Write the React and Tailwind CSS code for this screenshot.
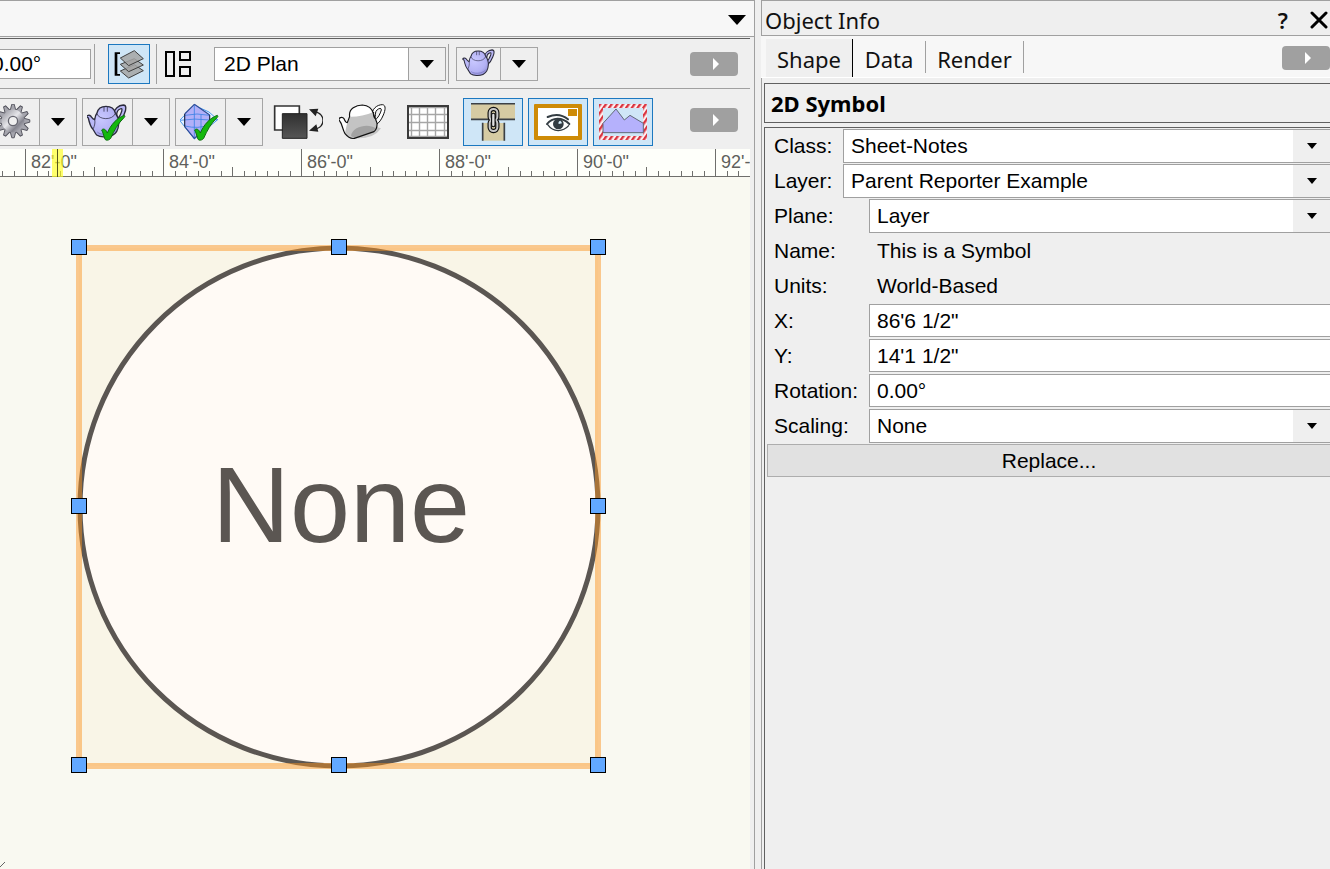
import React from 'react';

function Caret({ className = 'h-2 w-3.5' }) {
  return (
    <svg viewBox="0 0 14 8" preserveAspectRatio="none" className={className} aria-hidden="true">
      <path d="M0 0H14L7 8Z" fill="#000" />
    </svg>
  );
}

function Teapot({ checked, className }) {
  return (
    <svg viewBox={checked ? '5 -2 126 120' : '2 0 126 120'} className={className} aria-hidden="true">
      <defs>
        <radialGradient id="pot" cx="0.45" cy="0.4" r="0.65">
          <stop offset="0" stopColor="#c9c8ff" />
          <stop offset="0.7" stopColor="#b3b1f4" />
          <stop offset="1" stopColor="#9290d8" />
        </radialGradient>
      </defs>
      <path
        d="M84 36C86 18 100 8 114 7C124 7 123 20 117 33C112 46 106 56 97 63L91 53C100 47 106 36 109 26C111 18 110 16 104 19C97 22 94 28 94 37Z"
        fill="#b9b7f5"
        stroke="#2b2b3c"
        strokeWidth="4"
      />
      <path
        d="M4 42C4 38 12 36 16 40C20 45 22 50 28 51C29 42 31 36 35 31C38 17 50 11 62 11C76 11 87 18 90 31C97 40 101 52 100 64C99 82 91 94 80 99C66 105 44 104 34 97C29 92 28 87 23 80C15 72 11 56 9 46Z"
        fill="url(#pot)"
        stroke="#2b2b3c"
        strokeWidth="4"
        strokeLinejoin="round"
      />
      <path d="M35 33C40 52 82 54 90 32M56 11V27M66 11V27M28 51C30 60 28 68 24 78" fill="none" stroke="#3c3b58" strokeWidth="2.5" />
      <path d="M36 88C45 98 76 98 90 82" fill="none" stroke="#7d7bc4" strokeWidth="3" />
      {checked && <Check />}
    </svg>
  );
}

function Check() {
  return (
    <path
      d="M49 82C54 76 62 80 66 91C76 67 94 46 117 38C119 40 119 42 117 44C98 62 86 84 76 107C72 113 61 115 58 108C55 97 53 90 49 82Z"
      fill="#14b80c"
      stroke="#116b12"
      strokeWidth="3"
      strokeLinejoin="round"
    />
  );
}

function DiamondGrid() {
  return (
    <svg viewBox="5 -2 126 120" className="h-10 w-[42px]" aria-hidden="true">
      <path d="M4 53L48 8L92 28L118 51L48 109Z" fill="#e6f1ff" stroke="#4b9bf0" strokeWidth="3" />
      <path d="M48 5L94 37V65L48 107L19 72V34Z" fill="#b2b0f8" />
      <path d="M20 38Q55 30 94 38M4 53Q50 46 94 52L118 51M20 70Q60 80 94 66M48 6V105M68 36V88" fill="none" stroke="#3c82e6" strokeWidth="2.5" />
      <path d="M19 34V72M94 37V65" fill="none" stroke="#1d2846" strokeWidth="3.5" />
      <path d="M48 5L94 37M94 65L48 107L19 72M19 34L48 5" fill="none" stroke="#2c4c96" strokeWidth="3.5" />
      <Check />
    </svg>
  );
}

function Gear() {
  const teeth = Array.from({ length: 12 }, (_, i) => i * 30);
  return (
    <svg viewBox="2 1 36 36" className="h-9 w-9" aria-hidden="true">
      <defs>
        <linearGradient id="steel" x1="0" y1="0" x2="1" y2="1">
          <stop offset="0" stopColor="#8b8b94" />
          <stop offset="0.45" stopColor="#e6e6ea" />
          <stop offset="0.7" stopColor="#85858f" />
          <stop offset="1" stopColor="#d0d0d6" />
        </linearGradient>
      </defs>
      {teeth.map((a) => (
        <path key={a} d="M15 8L16.8 1.2H19.2L21 8Z" fill="#a5a5ad" stroke="#4e4e58" strokeWidth="0.9" transform={`rotate(${a} 18 18)`} />
      ))}
      <circle cx="18" cy="18" r="11.4" fill="url(#steel)" />
      <circle cx="18" cy="18" r="4.6" fill="#f0f0f0" stroke="#666670" strokeWidth="1.3" />
    </svg>
  );
}

function LayerStack() {
  return (
    <svg viewBox="0 0 90 90" className="h-[30px] w-[30px]" aria-hidden="true">
      <path d="M2 10H18V15H10V75H18V80H2Z" fill="#000" />
      <g fill="#a5a5a5" fillOpacity="0.85" stroke="#3f3f3f" strokeWidth="3" strokeLinejoin="round">
        <path d="M19 66L61 47L88 65L44 87Z" />
        <path d="M19 46L61 29L88 48L44 68Z" />
        <path d="M19 27L61 5L88 29L44 50Z" />
      </g>
    </svg>
  );
}

function Panes() {
  return (
    <svg viewBox="0 0 26 26" className="h-[26px] w-[26px]" aria-hidden="true">
      <g fill="none" stroke="#000" strokeWidth="2">
        <path d="M1 1H9V25H1ZM15 1H25V9H15ZM15 16H25V25H15Z" />
      </g>
    </svg>
  );
}

function Swap() {
  return (
    <svg viewBox="-2 0 150 105" className="h-[35px] w-[50px]" aria-hidden="true">
      <defs>
        <linearGradient id="dark" x1="0" y1="0" x2="0" y2="1">
          <stop offset="0" stopColor="#303030" />
          <stop offset="1" stopColor="#555" />
        </linearGradient>
      </defs>
      <path d="M3 3H77V75H3Z" fill="#fff" stroke="#333" strokeWidth="5" />
      <path d="M26 26H100V100H26Z" fill="url(#dark)" stroke="#222" strokeWidth="3" />
      <path d="M124 20C156 29 156 64 124 73" fill="none" stroke="#222" strokeWidth="4" />
      <path d="M106 13L134 11L126 34ZM106 77L128 58L134 80Z" fill="#222" />
    </svg>
  );
}

function ShadedPot() {
  return (
    <svg viewBox="2 2 144 114" className="h-[38px] w-12" aria-hidden="true">
      <path d="M45 108Q106 112 128 78L100 70Z" fill="#c6c6c6" />
      <path d="M101 42C99 20 116 7 132 7C144 8 141 24 135 38C129 52 123 61 114 66L108 55C119 48 126 34 129 23C130 15 118 18 113 27C110 34 112 40 110 48Z" fill="#fff" stroke="#111" strokeWidth="3" />
      <path d="M2 53C0 46 12 42 17 49C20 56 23 61 27 61L34 42C30 19 54 8 72 8C88 9 100 15 105 33L116 62C117 76 113 83 107 88L48 108C38 110 28 104 20 94C12 80 12 64 2 53Z" fill="#fff" />
      <path d="M27 61L33 43C54 44 83 39 106 29L116 62C117 76 113 83 107 88L48 108C38 110 27 103 20 94C21 84 24 72 27 61Z" fill="#c4c4c4" />
      <path d="M38 100C42 72 91 62 112 78L107 88L48 108Z" fill="#a2a2a2" />
      <path d="M2 53C0 46 12 42 17 49C20 56 23 61 27 61L34 42C30 19 54 8 72 8C88 9 100 15 105 33L116 62C117 76 113 83 107 88L48 108C38 110 28 104 20 94C12 80 12 64 2 53ZM106 29C104 38 106 43 109 48" fill="none" stroke="#111" strokeWidth="3.5" strokeLinejoin="round" />
    </svg>
  );
}

function GridIcon() {
  return (
    <svg viewBox="0 0 42 34" className="mr-px h-[34px] w-[42px]" aria-hidden="true">
      <path d="M1 1H41V33H1Z" fill="#fff" />
      <path d="M4.5 1V33M12.5 1V33M20.5 1V33M28.5 1V33M37.5 1V33M1 2.5H41M1 9.5H41M1 17.5H41M1 25.5H41M1 31.5H41" stroke="#a6a6a6" strokeWidth="1.4" fill="none" />
      <path d="M1 1H41V33H1Z" fill="none" stroke="#3a3a3a" strokeWidth="2" />
    </svg>
  );
}

function WallLink() {
  return (
    <svg viewBox="0 0 132 114" className="h-[38px] w-11" aria-hidden="true">
      <path d="M0 3H132V49H0Z" fill="#d6cba3" />
      <path d="M35 60H100V113H35Z" fill="#d6cba3" />
      <path d="M0 2H132M0 49H132M35 59V113M100 59V113" stroke="#3b4046" strokeWidth="5" fill="none" />
      <g fill="none">
        <rect x="56" y="18" width="23" height="34" rx="11" stroke="#111" strokeWidth="13" />
        <rect x="56" y="50" width="23" height="34" rx="11" stroke="#111" strokeWidth="13" />
        <rect x="56" y="18" width="23" height="34" rx="11" stroke="#c8c8c8" strokeWidth="6" />
        <rect x="56" y="50" width="23" height="34" rx="11" stroke="#c8c8c8" strokeWidth="6" />
        <path d="M67 36V66" stroke="#111" strokeWidth="14" strokeLinecap="round" />
        <path d="M67 36V66" stroke="#e0e0e0" strokeWidth="7" strokeLinecap="round" />
      </g>
    </svg>
  );
}

function EyeFrame() {
  return (
    <svg viewBox="0 0 144 108" className="h-9 w-12" aria-hidden="true">
      <rect width="144" height="108" rx="3" fill="#ce8b07" />
      <path d="M12 12H132V96H12Z" fill="#fff" />
      <path d="M102 15H129V36H102Z" fill="#ce8b07" />
      <g fill="none" stroke="#333c42" strokeLinecap="round">
        <path d="M41 39C62 30 85 32 102 46" strokeWidth="6" />
        <path d="M39 60C55 40 84 38 106 60" strokeWidth="6" />
        <path d="M41 62C58 86 87 84 104 65" strokeWidth="4" />
      </g>
      <circle cx="73" cy="60" r="16" fill="#333c42" />
      <path d="M74 60A8 8 0 0 1 79 50A12 12 0 0 1 84 58Z" fill="#d8eefb" />
    </svg>
  );
}

function CropView() {
  return (
    <svg viewBox="0 0 144 108" className="h-9 w-12" aria-hidden="true">
      <defs>
        <pattern id="hatch" width="14" height="14" patternUnits="userSpaceOnUse" patternTransform="rotate(35)">
          <rect width="14" height="14" fill="#fdeff0" />
          <rect width="7" height="14" fill="#d93440" />
        </pattern>
      </defs>
      <path d="M0 0H144V108H0ZM12 12V96H132V12Z" fill="url(#hatch)" fillRule="evenodd" />
      <path d="M12 58L51 15L76 48L93 34L133 58V86H12Z" fill="#b5b1fc" stroke="#626a78" strokeWidth="3" />
    </svg>
  );
}

function MoreButton({ label }) {
  return (
    <button aria-label={label} className="flex h-6 w-12 shrink-0 items-center justify-center rounded bg-[#a0a0a0] pl-1">
      <svg viewBox="0 0 6 12" className="h-3 w-1.5" aria-hidden="true">
        <path d="M0 0L6 6L0 12Z" fill="#fff" />
      </svg>
    </button>
  );
}

function SplitButton({ label, small, className = '', children }) {
  return (
    <div className={`flex shrink-0 border border-[#a5a5a5] ${small ? 'h-[34px]' : 'h-12'} ${className}`}>
      <button aria-label={label} className={`flex items-center justify-center ${small ? 'w-[43px]' : 'w-[49px]'}`}>
        {children}
      </button>
      <button aria-label={`${label} options`} className="flex w-[37px] items-center justify-center border-l border-[#a5a5a5]">
        <Caret />
      </button>
    </div>
  );
}

function ToolButton({ label, active, children }) {
  return (
    <button
      aria-label={label}
      className={`flex h-12 w-[60px] shrink-0 items-center justify-center border ${active ? 'border-[#1c78c0] bg-[#cfe6f7]' : 'border-transparent'}`}
    >
      {children}
    </button>
  );
}

function Separator() {
  return <div className="h-10 w-px shrink-0 bg-[#a0a0a0]" />;
}

const ticks = Array.from({ length: 140 }, (_, i) => i - 2);

function Ruler() {
  return (
    <svg className="block h-7 w-full bg-[#fefffa]" role="img" aria-label="Ruler">
      {ticks.map((i) => {
        const x = 25.5 + Math.round(i * 11.5);
        const top = i % 12 === 0 ? 0 : i % 6 === 0 ? 18 : 22;
        return <path key={i} d={`M${x} ${top}V27`} stroke="#6f6f6c" />;
      })}
      <path d="M0 27.5H2000" stroke="#6f6f6c" />
      {[82, 84, 86, 88, 90, 92].map((n, i) => (
        <text key={n} x={31 + i * 138} y="19" className="fill-[#5f5f5c] font-['Liberation_Sans',sans-serif] text-[18px]">
          {`${n}'-0"`}
        </text>
      ))}
      <rect x="52" width="11" height="28" fill="#ffff20" fillOpacity="0.65" />
      <path d="M57.5 0V28" stroke="#55551c" />
    </svg>
  );
}

const handles = [
  [79, 70], [339, 70], [598, 70],
  [79, 329], [598, 329],
  [79, 588], [339, 588], [598, 588],
];

function Drawing() {
  return (
    <svg className="block min-h-[692px] w-full flex-1 bg-[#f9f9f1]" role="img" aria-label="Drawing area">
      <rect x="79" y="71" width="519" height="518" fill="#f9f5e7" />
      <circle cx="339" cy="330" r="259" fill="#fffaf5" stroke="#5b5652" strokeWidth="5" />
      <text x="341" y="365" textAnchor="middle" className="fill-[#5b5652] font-['Liberation_Sans',sans-serif] text-[108px]">
        None
      </text>
      <rect x="79" y="71" width="519" height="518" fill="none" stroke="#fb931f" strokeOpacity="0.48" strokeWidth="6" />
      {handles.map(([x, y]) => (
        <rect key={`${x}-${y}`} x={x - 7.5} y={y - 7.5} width="15" height="15" fill="#62a8ff" stroke="#000" />
      ))}
      <path d="M0 690L5 685" stroke="#666" />
    </svg>
  );
}

function Row({ id, label, wide, children }) {
  return (
    <div className="flex h-[35px] items-start">
      <label htmlFor={id} className={`shrink-0 pl-[7px] leading-[34px] ${wide ? 'w-[76px]' : 'w-[102px]'}`}>
        {label}
      </label>
      {children}
    </div>
  );
}

function PanelSelect({ id, value }) {
  return (
    <div className="relative h-[34px] flex-1 border-y border-l border-[#a0a0a0] bg-white">
      <select id={id} className="h-full w-full appearance-none bg-transparent pr-10 pl-[7px] outline-none">
        <option>{value}</option>
      </select>
      <span className="pointer-events-none absolute inset-y-0 right-0 flex w-[37px] items-center justify-center bg-[#efefef]">
        <Caret className="h-1.5 w-2.5" />
      </span>
    </div>
  );
}

function PanelInput({ id, value }) {
  return (
    <input
      id={id}
      defaultValue={value}
      className="h-[33px] min-w-0 flex-1 border-y border-l border-[#a0a0a0] bg-white pl-[7px] outline-none"
    />
  );
}

function ObjectInfo() {
  return (
    <aside className="flex w-[569px] shrink-0 flex-col">
      <header className="flex h-9 items-center border-y border-l border-[#a0a0a0] pt-1 pr-0.5 pl-[3px] font-['Noto_Sans',sans-serif] text-[22px] leading-8 text-[#111]">
        <h1 className="flex-1">Object Info</h1>
        <button aria-label="Help" className="mr-[22px] font-semibold">?</button>
        <button aria-label="Close">
          <svg viewBox="0 0 18 18" className="h-[18px] w-[18px]" aria-hidden="true">
            <path d="M2 2L16 16M16 2L2 16" stroke="#000" strokeWidth="3" strokeLinecap="round" />
          </svg>
        </button>
      </header>
      <nav role="tablist" className="flex h-[42px] items-end border-b border-white bg-[#f7f7f7] pl-[5px] font-['Noto_Sans',sans-serif] text-[22px] text-[#111]">
        <button role="tab" aria-selected="true" className="h-[38px] w-[87px] border-r border-black bg-[#efefef] pt-0.5">Shape</button>
        <button role="tab" aria-selected="false" className="h-[38px] w-[72px] pt-0.5">Data</button>
        <div className="mb-1 h-8 w-px bg-[#a0a0a0]" />
        <button role="tab" aria-selected="false" className="h-[38px] w-[97px] pt-0.5">Render</button>
        <div className="mb-1 h-8 w-px bg-[#a0a0a0]" />
        <div className="mb-[7px] ml-auto">
          <MoreButton label="More tabs" />
        </div>
      </nav>
      <div className="flex flex-1 flex-col gap-1 border-l border-[#a0a0a0] pt-[5px] pl-0.5">
        <h2 className="h-10 border-y border-l border-[#606060] pl-1.5 font-['Noto_Sans',sans-serif] text-[22px] leading-[38px] font-bold">
          2D Symbol
        </h2>
        <form className="flex-1 border-t border-l border-[#606060] pt-px pl-0.5 text-[21px]">
          <Row id="class" label="Class:" wide><PanelSelect id="class" value="Sheet-Notes" /></Row>
          <Row id="layer" label="Layer:" wide><PanelSelect id="layer" value="Parent Reporter Example" /></Row>
          <Row id="plane" label="Plane:"><PanelSelect id="plane" value="Layer" /></Row>
          <Row id="name" label="Name:"><output id="name" className="pl-2 leading-[34px]">This is a Symbol</output></Row>
          <Row id="units" label="Units:"><output id="units" className="pl-2 leading-[34px]">World-Based</output></Row>
          <Row id="x" label="X:"><PanelInput id="x" value={'86\'6 1/2"'} /></Row>
          <Row id="y" label="Y:"><PanelInput id="y" value={'14\'1 1/2"'} /></Row>
          <Row id="rotation" label="Rotation:"><PanelInput id="rotation" value="0.00°" /></Row>
          <Row id="scaling" label="Scaling:"><PanelSelect id="scaling" value="None" /></Row>
          <button type="button" className="h-[33px] w-full border-y border-l border-[#adadad] bg-[#e1e1e1]">Replace...</button>
        </form>
      </div>
    </aside>
  );
}

export default function App() {
  return (
    <div className="flex min-h-screen overflow-hidden bg-[#efefef] font-['Liberation_Sans',sans-serif] text-black">
      <main className="mr-1.5 flex min-w-0 flex-1 flex-col border-r border-[#a0a0a0]">
        <div className="flex h-[37px] items-center justify-end border-y border-[#a0a0a0] bg-[#f7f7f7] pt-0.5 pr-2">
          <button aria-label="View bar menu">
            <Caret className="h-2.5 w-[18px]" />
          </button>
        </div>
        <div className="mt-px mr-1 flex flex-1 flex-col border-t border-[#606060]">
          <div className="flex h-[50px] items-center overflow-hidden border-b border-[#a0a0a0] pr-3">
            <input
              aria-label="View angle"
              defaultValue="0.00°"
              className="mr-[3px] -ml-4 h-[30px] w-[107px] shrink-0 border border-[#a0a0a0] bg-white pl-[7px] text-[21px] outline-none"
            />
            <Separator />
            <button aria-label="Layer options" className="mr-1.5 ml-[13px] flex h-10 w-[42px] shrink-0 items-center justify-center border border-[#1c78c0] bg-[#cfe6f7]">
              <LayerStack />
            </button>
            <Separator />
            <button aria-label="View panes" className="ml-2 shrink-0">
              <Panes />
            </button>
            <div className="relative mr-0.5 ml-[23px] h-[34px] w-[232px] shrink-0 border border-[#a0a0a0] bg-white">
              <select aria-label="Current view" className="h-full w-full appearance-none bg-transparent pr-10 pl-[9px] text-[21px] outline-none">
                <option>2D Plan</option>
              </select>
              <span className="pointer-events-none absolute inset-y-0 right-0 flex w-[37px] items-center justify-center border-l border-[#a0a0a0] bg-[#efefef]">
                <Caret />
              </span>
            </div>
            <Separator />
            <SplitButton label="Render mode" small className="mr-4 ml-[7px]">
              <Teapot className="h-8 w-[34px]" />
            </SplitButton>
            <div className="ml-auto">
              <MoreButton label="More view options" />
            </div>
          </div>
          <div className="flex h-[60px] items-start gap-[5px] overflow-hidden pt-[9px] pr-3">
            <SplitButton label="Settings" className="-ml-[11px]"><Gear /></SplitButton>
            <SplitButton label="Render style"><Teapot checked className="h-10 w-[42px]" /></SplitButton>
            <SplitButton label="Surface style"><DiamondGrid /></SplitButton>
            <ToolButton label="Swap colors"><Swap /></ToolButton>
            <ToolButton label="Shaded view"><ShadedPot /></ToolButton>
            <ToolButton label="Show grid"><GridIcon /></ToolButton>
            <ToolButton label="Link walls" active><WallLink /></ToolButton>
            <ToolButton label="Show viewport" active><EyeFrame /></ToolButton>
            <ToolButton label="Crop view" active><CropView /></ToolButton>
            <div className="mt-2.5 ml-auto">
              <MoreButton label="More tools" />
            </div>
          </div>
          <Ruler />
          <Drawing />
        </div>
      </main>
      <ObjectInfo />
    </div>
  );
}
